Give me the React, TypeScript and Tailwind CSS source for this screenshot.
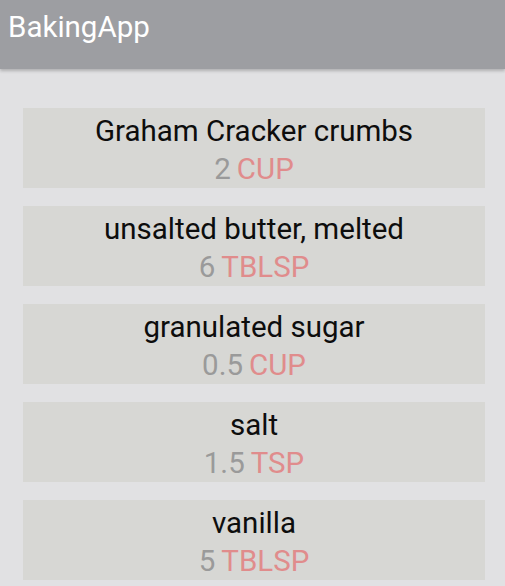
import React from "react";

const items = [
  { name: "Graham Cracker crumbs", qty: "2", unit: "CUP" },
  { name: "unsalted butter, melted", qty: "6", unit: "TBLSP" },
  { name: "granulated sugar", qty: "0.5", unit: "CUP" },
  { name: "salt", qty: "1.5", unit: "TSP" },
  { name: "vanilla", qty: "5", unit: "TBLSP" },
];

export default function App() {
  return (
    <div
      className="w-[505px] h-[586px] bg-[#e1e1e3] overflow-hidden flex flex-col"
      style={{ fontFamily: "Roboto, 'Liberation Sans', sans-serif" }}
    >
      <div className="h-[69px] shrink-0 bg-[#9d9ea2] pl-[8px] pt-[10px] text-white text-[29.5px] leading-[34.6px] shadow-[0_2px_3px_rgba(0,0,0,0.22)] relative z-10">
        BakingApp
      </div>
      <div className="flex flex-col gap-[18px] pt-[39px] pl-[23px] pr-[20px]">
        {items.map((it) => (
          <div
            key={it.name}
            className="h-[80px] bg-[#d7d7d4] flex flex-col items-center pt-[4px] text-[29.5px] leading-[38px]"
          >
            <div className="text-[#0d0d0d]">{it.name}</div>
            <div className="flex gap-[6px]">
              <span className="text-[#9a9a9a]">{it.qty}</span>
              <span className="text-[#e08c8c]">{it.unit}</span>
            </div>
          </div>
        ))}
      </div>
    </div>
  );
}
